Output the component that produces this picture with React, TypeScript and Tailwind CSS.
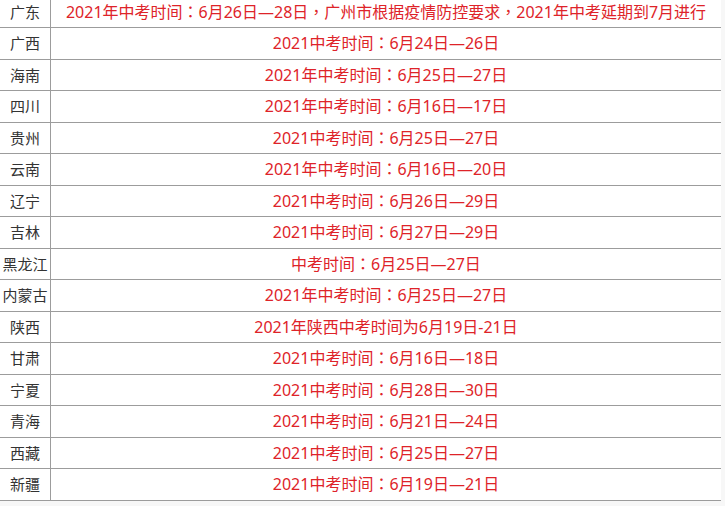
import React from 'react';

const rows: [string, string][] = [
    ['广东', '2021年中考时间：6月26日—28日，广州市根据疫情防控要求，2021年中考延期到7月进行'],
    ['广西', '2021中考时间：6月24日—26日'],
    ['海南', '2021年中考时间：6月25日—27日'],
    ['四川', '2021年中考时间：6月16日—17日'],
    ['贵州', '2021中考时间：6月25日—27日'],
    ['云南', '2021年中考时间：6月16日—20日'],
    ['辽宁', '2021中考时间：6月26日—29日'],
    ['吉林', '2021中考时间：6月27日—29日'],
    ['黑龙江', '中考时间：6月25日—27日'],
    ['内蒙古', '2021年中考时间：6月25日—27日'],
    ['陕西', '2021年陕西中考时间为6月19日-21日'],
    ['甘肃', '2021中考时间：6月16日—18日'],
    ['宁夏', '2021中考时间：6月28日—30日'],
    ['青海', '2021中考时间：6月21日—24日'],
    ['西藏', '2021中考时间：6月25日—27日'],
    ['新疆', '2021中考时间：6月19日—21日'],
];

export default function App() {
    return (
        <div
            className="w-[725px] h-[506px] overflow-hidden bg-[#f7f7f7]"
            style={{ fontFamily: '"Noto Sans", "Noto Sans CJK TC", "Noto Sans CJK SC", sans-serif' }}
        >
            <div className="w-[721px] bg-white -mt-[3.5px]">
                {rows.map(([province, info]) => (
                    <div key={province} className="flex h-[31.5px] border-b border-[#9c9c9c]">
                        <div className="w-[51px] shrink-0 flex items-center justify-center text-[15px] text-[#333] border-r border-[#9c9c9c] whitespace-nowrap">
                            {province}
                        </div>
                        <div className="flex-1 flex items-center justify-center text-[16px] text-[#de2329] whitespace-nowrap">
                            {info}
                        </div>
                    </div>
                ))}
            </div>
        </div>
    );
}
